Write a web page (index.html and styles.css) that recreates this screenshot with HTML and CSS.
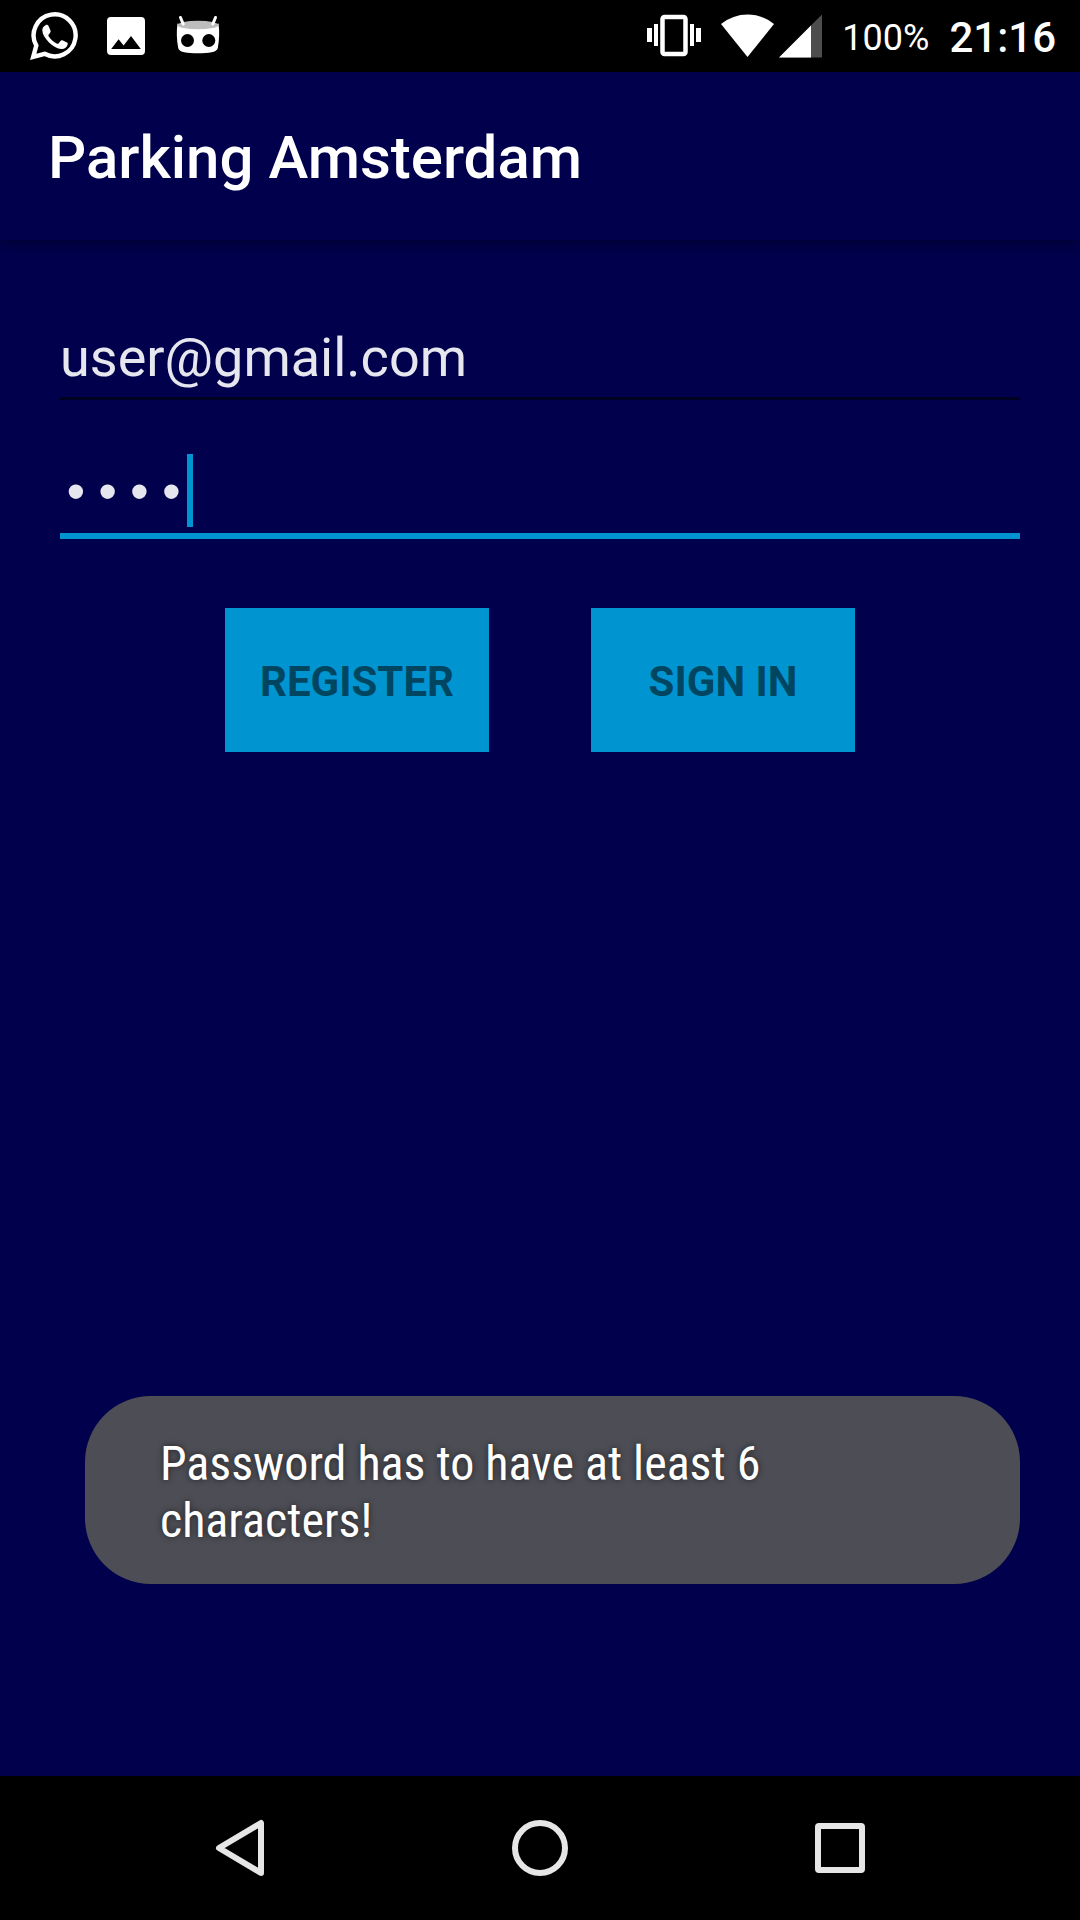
FILE: index.html
```html
<!DOCTYPE html>
<html lang="en">
<head>
<meta charset="utf-8">
<meta name="viewport" content="width=device-width, initial-scale=1">
<title>Parking Amsterdam</title>
<link rel="stylesheet" href="styles.css">
</head>
<body>
<div class="screen">
  <div class="status-bar">
    <div class="notifications">
      <svg class="notification-icon" viewBox="0 0 48 48" aria-hidden="true">
        <path d="M3.2 44.8 6.3 33.6A21 21 0 1 1 14.6 41.8Z" fill="none" stroke="#fff" stroke-width="4.4"/>
        <path d="M15.5 13.2c1-.6 2.300-.6 2.900.5l2.100 4.900c.3.900.1 1.500-.4 2.200l-1.500 1.900c-.4.500-.4.900-.1 1.400 2.200 3.600 4.900 6 8.600 7.600.6.300 1 .2 1.400-.3l2.200-2.700c.5-.6 1-.7 1.700-.4l4.600 2.300c.7.400.9.900.7 1.700-.6 3.300-3.400 4.900-6.400 4.700-4-.4-8.500-2.800-12.300-6.600-4-4.100-6.700-8.300-6.700-12.100 0-2.200 1.200-4.100 3.200-5.100Z" fill="#fff"/>
      </svg>
      <svg class="notification-icon" viewBox="0 0 48 48" aria-hidden="true">
        <path fill-rule="evenodd" d="M9 5h30a4 4 0 0 1 4 4v30a4 4 0 0 1-4 4H9a4 4 0 0 1-4-4V9a4 4 0 0 1 4-4Zm.2 32h29.600l-9.800-13-7.400 9.600-5-6.300Z" fill="#fff"/>
      </svg>
      <svg class="notification-icon" viewBox="0 0 48 48" aria-hidden="true">
        <path d="M3.500 11.500c12 5 29 5 41 0 1.200 8 .8 16-.7 24.500-1 4.500-9 5.300-19.800 5.300S5.200 40.500 4.200 36c-1.500-8.500-1.900-16.500-.7-24.500Z" fill="#fff"/>
        <ellipse cx="24" cy="13" rx="20.500" ry="4.300" fill="#bdbdbd"/>
        <path d="m6.500 5.500 2.700 6.500M41.500 5.500 38.800 12" stroke="#fff" stroke-width="3" stroke-linecap="round"/>
        <circle cx="13.500" cy="28.500" r="6.500"/><circle cx="34.800" cy="28.500" r="6.500"/>
      </svg>
    </div>
    <div class="system">
      <svg class="vibrate-icon" viewBox="0 0 54 44" role="img" aria-label="Vibrate">
        <rect x="15.500" y="3" width="23" height="37" rx="2" fill="none" stroke="#fff" stroke-width="4.500"/>
        <path d="M0 14h5v14H0zM7 10h4v22H7zM43 10h4v22h-4zM49 14h5v14h-5z" fill="#fff"/>
      </svg>
      <div class="signals">
        <svg class="wifi-icon" viewBox="0 0 54 44" role="img" aria-label="Wi-Fi"><path d="M0 10Q12 .5 26.500.5T53 10L26.500 43Z" fill="#fff"/></svg>
        <svg class="cell-icon" viewBox="0 0 43 44" role="img" aria-label="Mobile signal"><path d="M0 43.500 43 .5v43Z" fill="#4d4d4d"/><path d="M0 43.500 32 11.500v32Z" fill="#fff"/></svg>
      </div>
      <span class="battery">100%</span>
      <time class="clock" datetime="21:16">21:16</time>
    </div>
  </div>

  <header class="app-bar"><h1 class="app-title">Parking Amsterdam</h1></header>

  <main class="content">
    <form class="login">
      <input class="field email" type="email" aria-label="Email" value="user@gmail.com">
      <div class="password-row">
        <input class="field password" type="password" aria-label="Password" value="1234">
        <span class="caret"></span>
      </div>
      <div class="actions">
        <button class="action" type="button">REGISTER</button>
        <button class="action" type="button">SIGN IN</button>
      </div>
    </form>
    <div class="toast" role="status">Password has to have at least 6 characters!</div>
  </main>

  <nav class="nav-bar">
    <button class="nav-button" type="button" aria-label="Back"><svg class="nav-icon" viewBox="0 0 60 60"><path d="M51 5v50L9 30Z" fill="none" stroke="#e6e6e6" stroke-width="6" stroke-linejoin="round"/></svg></button>
    <button class="nav-button" type="button" aria-label="Home"><svg class="nav-icon" viewBox="0 0 60 60"><circle cx="30" cy="30" r="25" fill="none" stroke="#e6e6e6" stroke-width="6"/></svg></button>
    <button class="nav-button" type="button" aria-label="Recent apps"><svg class="nav-icon" viewBox="0 0 60 60"><rect x="8" y="8" width="44" height="44" rx="1" fill="none" stroke="#e6e6e6" stroke-width="6"/></svg></button>
  </nav>
</div>
</body>
</html>
```
FILE: styles.css
```css
* { box-sizing: border-box; }

body {
  margin: 0;
  background: #00004c;
  color: #fff;
  font-family: Roboto, sans-serif;
}

.screen {
  display: flex;
  flex-direction: column;
  min-height: 100vh;
}

.status-bar {
  display: flex;
  justify-content: space-between;
  align-items: center;
  height: 72px;
  padding: 0 24px 0 30px;
  background: #000;
}

.notifications { display: flex; gap: 24px; }
.notification-icon { width: 48px; height: 48px; }

.system { display: flex; align-items: center; gap: 20px; }
.signals { display: flex; gap: 4px; }
.vibrate-icon, .wifi-icon { width: 54px; height: 44px; }
.cell-icon { width: 43px; height: 44px; }
.battery { font-size: 36px; line-height: 42px; padding-top: 4px; }
.clock { font-size: 42px; line-height: 48px; font-weight: 500; padding-top: 4px; }

.app-bar {
  display: flex;
  align-items: center;
  height: 168px;
  padding: 4px 48px 0;
  box-shadow: 0 4px 12px rgba(0, 0, 0, 0.3);
}

.app-title {
  margin: 0;
  font-size: 60px;
  line-height: 72px;
  font-weight: 500;
}

.content {
  position: relative;
  flex: 1;
  padding: 86px 60px 0;
}

.login { display: flex; flex-direction: column; }

.field {
  display: block;
  width: 100%;
  margin: 0;
  border: 0;
  border-radius: 0;
  outline: 0;
  background: none;
  color: #e6e6ee;
  font-size: 54px;
}

.email {
  height: 74px;
  padding: 0 0 9px;
  border-bottom: 3px solid #000022;
  font-family: Roboto, sans-serif;
}

.password-row {
  position: relative;
  margin-top: 54px;
  font-family: "Liberation Mono", monospace;
  font-size: 53px;
}

.password {
  height: 85px;
  padding: 4px 0 0;
  border-bottom: 6px solid #0094d0;
  font-family: inherit;
  font-size: inherit;
}

/* Thick insertion bar after the four masked characters */
.caret {
  position: absolute;
  top: 0;
  left: 4ch;
  width: 6px;
  height: 73px;
  background: #0094d0;
}

.actions {
  display: flex;
  justify-content: center;
  gap: 102px;
  margin-top: 69px;
}

.action {
  width: 264px;
  height: 144px;
  padding: 2px 0 0;
  border: 0;
  background: #0094d0;
  color: #004661;
  font-family: Roboto, sans-serif;
  font-size: 42px;
  font-weight: 700;
}

.toast {
  position: absolute;
  left: 85px;
  right: 60px;
  bottom: 192px;
  padding: 39px 75px 35px;
  border-radius: 66px;
  background: #4d4d55;
  font-family: "Roboto Condensed", Roboto, sans-serif;
  font-size: 48px;
  line-height: 57px;
  text-shadow: 0 0 6px rgba(0, 0, 0, 0.6);
}

.nav-bar {
  display: flex;
  height: 144px;
  padding: 0 90px;
  background: #000;
}

.nav-button {
  display: flex;
  flex: 1;
  align-items: center;
  justify-content: center;
  padding: 0;
  border: 0;
  background: none;
}

.nav-icon { width: 60px; height: 60px; }
```
